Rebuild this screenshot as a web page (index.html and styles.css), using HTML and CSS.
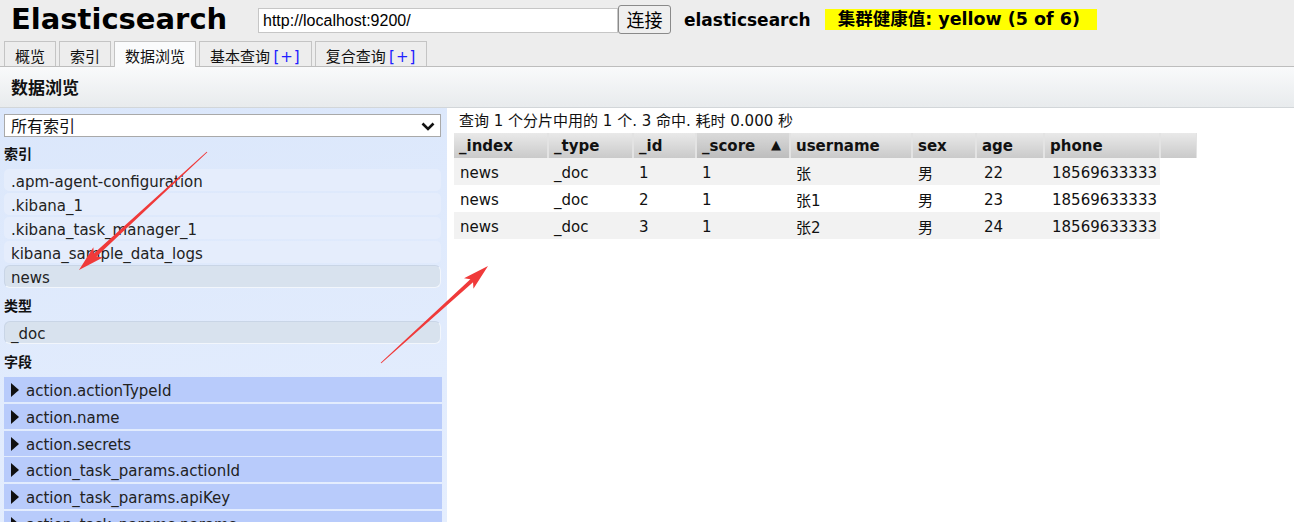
FILE: index.html
```html
<!DOCTYPE html>
<html lang="zh">
<head>
<meta charset="utf-8">
<title>Elasticsearch head</title>
<link rel="stylesheet" href="styles.css">
</head>
<body>
<div class="top">
  <div class="header">
    <h1 class="logo">Elasticsearch</h1>
    <input class="url" type="text" value="http://localhost:9200/">
    <button class="connect">连接</button>
    <span class="cluster">elasticsearch</span>
    <span class="health">集群健康值: yellow (5 of 6)</span>
  </div>
  <div class="tabs">
    <div class="tab">概览</div>
    <div class="tab">索引</div>
    <div class="tab active">数据浏览</div>
    <div class="tab">基本查询 <span class="plus">[+]</span></div>
    <div class="tab">复合查询 <span class="plus">[+]</span></div>
  </div>
</div>
<div class="page-title">数据浏览</div>
<div class="browser">
  <aside class="sidebar">
    <div class="select-wrap">
      <select class="index-select"><option>所有索引</option></select>
      <svg class="chevron" width="14" height="9" viewBox="0 0 14 9"><path d="M1.5 1.5 L7 7 L12.5 1.5" fill="none" stroke="#111" stroke-width="2.6"/></svg>
    </div>
    <div class="label">索引</div>
    <div class="item">.apm-agent-configuration</div>
    <div class="item">.kibana_1</div>
    <div class="item">.kibana_task_manager_1</div>
    <div class="item">kibana_sample_data_logs</div>
    <div class="item selected">news</div>
    <div class="label">类型</div>
    <div class="item selected">_doc</div>
    <div class="label">字段</div>
    <div class="field"><span class="tri"></span>action.actionTypeId</div>
    <div class="field"><span class="tri"></span>action.name</div>
    <div class="field"><span class="tri"></span>action.secrets</div>
    <div class="field"><span class="tri"></span>action_task_params.actionId</div>
    <div class="field"><span class="tri"></span>action_task_params.apiKey</div>
    <div class="field"><span class="tri"></span>action_task_params.params</div>
  </aside>
  <main class="results">
    <div class="status">查询 1 个分片中用的 1 个. 3 命中. 耗时 0.000 秒</div>
    <table class="grid">
      <colgroup>
        <col class="c-index"><col class="c-type"><col class="c-id"><col class="c-score"><col class="c-user"><col class="c-sex"><col class="c-age"><col class="c-phone"><col class="c-pad">
      </colgroup>
      <thead>
        <tr>
          <th>_index</th><th>_type</th><th>_id</th><th class="sorted">_score <span class="arrow">▲</span></th><th>username</th><th>sex</th><th>age</th><th>phone</th><th class="pad"></th>
        </tr>
      </thead>
      <tbody>
        <tr class="odd"><td>news</td><td>_doc</td><td>1</td><td>1</td><td>张</td><td>男</td><td>22</td><td>18569633333</td><td class="pad"></td></tr>
        <tr><td>news</td><td>_doc</td><td>2</td><td>1</td><td>张1</td><td>男</td><td>23</td><td>18569633333</td><td class="pad"></td></tr>
        <tr class="odd"><td>news</td><td>_doc</td><td>3</td><td>1</td><td>张2</td><td>男</td><td>24</td><td>18569633333</td><td class="pad"></td></tr>
      </tbody>
    </table>
  </main>
</div>
<svg class="annot" width="1294" height="522" viewBox="0 0 1294 522">
  <polygon fill="#f03a3a" points="207.34,152.37 96.53,256.55 102.86,257.52 79,270 93.36,247.22 93.81,253.61 206.66,151.63"/>
  <polygon fill="#f03a3a" points="381.34,363.37 473.04,282.26 473.43,288.66 488,266 464.03,278.28 470.36,279.30 380.66,362.63"/>
</svg>
</body>
</html>
```

FILE: styles.css
```css
* { box-sizing: border-box; }
html, body { margin: 0; padding: 0; }
body {
  background: #ffffff;
  font-family: "DejaVu Sans", "Noto Sans CJK SC", sans-serif;
  color: #111;
  width: 1294px;
  height: 522px;
  overflow: hidden;
  position: relative;
}
.top {
  background: #ededed;
  border-bottom: 1px solid #bdbdbd;
}
.header {
  display: flex;
  align-items: center;
  height: 38px;
  padding-left: 11px;
}
.logo {
  margin: 0 33px 0 0;
  font-family: "DejaVu Sans", sans-serif;
  font-size: 29px;
  font-weight: bold;
  line-height: 34px;
  color: #000;
  width: 214px;
  white-space: nowrap;
}
.url {
  width: 360px;
  height: 25px;
  margin: 3px 0 0 0;
  border: 1px solid #c6c6c6;
  padding: 0 4px;
  font-family: "Liberation Sans", Arial, sans-serif;
  font-size: 16px;
  color: #000;
  background: #fff;
}
.connect {
  width: 53px;
  height: 29px;
  margin: 0;
  padding: 0;
  border: 1px solid #8a8a8a;
  border-radius: 3px;
  background: #efefef;
  font-family: "Noto Sans CJK SC", sans-serif;
  font-size: 18px;
  color: #000;
}
.cluster {
  margin: 1px 0 0 13px;
  font-family: "DejaVu Sans", "Noto Sans CJK SC", sans-serif;
  font-weight: bold;
  font-size: 17px;
  color: #000;
}
.health {
  margin-left: 14px;
  height: 21px;
  line-height: 21px;
  padding: 0 17px 0 13px;
  background: #ffff00;
  font-family: "DejaVu Sans", "Noto Sans CJK SC", sans-serif;
  font-weight: bold;
  font-size: 17.5px;
  color: #000;
  white-space: nowrap;
}
.tabs {
  display: flex;
  gap: 3px;
  padding-left: 4px;
  margin-top: 3px;
  height: 25px;
}
.tab {
  height: 25px;
  padding: 4px 10px 0;
  line-height: 20px;
  border: 1px solid #c4c4c4;
  border-bottom: none;
  background: #ededed;
  font-family: "Noto Sans CJK SC", sans-serif;
  font-size: 15px;
  color: #111;
  white-space: nowrap;
}
.tab.active {
  background: #fafbfc;
  height: 26px;
  margin-bottom: -1px;
  position: relative;
}
.plus {
  font-family: "DejaVu Sans", sans-serif;
  color: #2020ff;
  letter-spacing: 1px;
}
.page-title {
  height: 41px;
  padding-left: 11px;
  line-height: 40px;
  background: linear-gradient(#f9fafb, #e8ebed);
  border-bottom: 1px solid #d2d6d9;
  font-family: "Noto Sans CJK SC", sans-serif;
  font-weight: bold;
  font-size: 17px;
  color: #111;
}
.browser {
  display: flex;
  height: 415px;
}
.sidebar {
  width: 447px;
  flex: none;
  padding: 6px 6px 0 4px;
  background: linear-gradient(170deg, #dbe7fb, #e5eefe);
  overflow: hidden;
}
.select-wrap {
  position: relative;
  width: 437px;
  height: 23px;
}
.index-select {
  display: block;
  appearance: none;
  -webkit-appearance: none;
  width: 437px;
  height: 23px;
  border: 1px solid #a9a9a9;
  border-radius: 0;
  background: #fff;
  font-family: "Noto Sans CJK SC", sans-serif;
  font-size: 16px;
  line-height: 21px;
  color: #111;
  padding: 0 0 0 6px;
}
.chevron {
  position: absolute;
  right: 6px;
  top: 8px;
  pointer-events: none;
}
.label {
  padding: 7px 0 6px;
  line-height: 19px;
  font-family: "Noto Sans CJK SC", sans-serif;
  font-weight: bold;
  font-size: 14px;
  color: #111;
}
.item {
  height: 22px;
  margin-bottom: 2px;
  padding: 2px 0 0 7px;
  line-height: 22px;
  border-radius: 5px;
  background: #e5edfc;
  font-size: 15px;
  color: #222;
  width: 437px;
}
.item.selected {
  background: #d8e2ee;
  border: 1px solid #c9d5e6;
  border-right-color: #f2f6fc;
  border-bottom-color: #f2f6fc;
  height: 23px;
  margin-bottom: 1px;
  padding: 2px 0 0 6px;
  line-height: 21px;
  border-radius: 6px;
}
.field {
  display: flex;
  align-items: center;
  width: 438px;
  height: 25px;
  margin-bottom: 1.8px;
  padding: 3px 0 0 7px;
  background: #b8cbfb;
  font-size: 15px;
  color: #222;
}
.tri {
  width: 0;
  height: 0;
  border-top: 7px solid transparent;
  border-bottom: 7px solid transparent;
  border-left: 8px solid #111;
  margin: -2px 7px 0 0;
}
.results {
  flex: 1;
  background: #fff;
  padding: 4px 0 0 7px;
}
.status {
  height: 21px;
  line-height: 19px;
  padding-left: 5px;
  font-size: 15px;
  color: #111;
  white-space: nowrap;
}
.grid {
  border-collapse: collapse;
  table-layout: fixed;
  width: 742px;
}
.c-index { width: 94px; }
.c-type { width: 85px; }
.c-id { width: 63px; }
.c-score { width: 94px; }
.c-user { width: 122px; }
.c-sex { width: 64px; }
.c-age { width: 68px; }
.c-phone { width: 116px; }
.c-pad { width: 36px; }
.grid th {
  height: 25px;
  padding: 0 0 0 5px;
  text-align: left;
  font-size: 15px;
  font-weight: bold;
  color: #111;
  background: linear-gradient(#e9e9e9, #cacaca);
  border-right: 2px solid #e3e3e3;
  white-space: nowrap;
}
.grid th.sorted {
  background: linear-gradient(#dadada, #bdbdbd);
}
.grid th.pad { border-right: 1px solid #e3e3e3; }
.arrow {
  float: right;
  margin-right: 8px;
  font-size: 13px;
}
.grid td {
  height: 27px;
  padding: 2px 0 0 6px;
  font-size: 15px;
  color: #111;
  white-space: nowrap;
}
.grid tr.odd td { background: #f2f2f2; }
.grid tr td.pad { background: transparent; }
.grid td:nth-child(7) { padding-left: 8px; }
.grid td:nth-child(8) { padding-left: 8px; }
.annot {
  position: absolute;
  left: 0;
  top: 0;
  pointer-events: none;
}
```
